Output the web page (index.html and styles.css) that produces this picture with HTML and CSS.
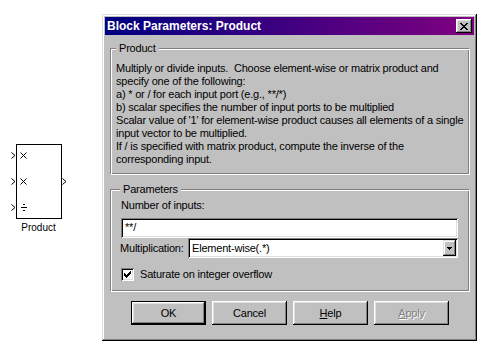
FILE: index.html
```html
<!DOCTYPE html>
<html lang="en">
<head>
    <meta charset="UTF-8">
    <title>Block Parameters: Product</title>
    <link rel="stylesheet" href="styles.css">
</head>
<body>
    <div class="desk">
        <div class="canvas">
            <!-- the Product block on the model canvas -->
            <div class="block">
                <svg width="80" height="82" viewBox="0 0 80 82" shape-rendering="crispEdges">
                    <rect x="16.5" y="4.5" width="45" height="74" fill="#fff" stroke="#000"/>
                    <g fill="none" stroke="#000" shape-rendering="auto">
                        <path d="M11.5 12.5 L15 15.5 L11.5 18.5"/>
                        <path d="M11.5 38.5 L15 41.5 L11.5 44.5"/>
                        <path d="M11.5 64.5 L15 67.5 L11.5 70.5"/>
                        <path d="M62.5 38.5 L66 41.5 L62.5 44.5"/>
                        <path d="M20.5 12.5 L26.5 18.5 M26.5 12.5 L20.5 18.5"/>
                        <path d="M20.5 38.5 L26.5 44.5 M26.5 38.5 L20.5 44.5"/>
                    </g>
                    <path d="M21 67h6v1h-6z M23 64h2v1h-2z M23 70h2v1h-2z" fill="#000"/>
                </svg>
                <div class="block-name">Product</div>
            </div>
        </div>

        <div class="dialog">
            <div class="titlebar">
                <span class="title">Block Parameters: Product</span>
                <span class="close">
                    <svg width="8" height="7" viewBox="0 0 8 7" shape-rendering="crispEdges"><path d="M0 0h2v1H0z M6 0h2v1H6z M1 1h2v1H1z M5 1h2v1H5z M2 2h4v1H2z M3 3h2v1H3z M2 4h4v1H2z M1 5h2v1H1z M5 5h2v1H5z M0 6h2v1H0z M6 6h2v1H6z" fill="#000"/></svg>
                </span>
            </div>

            <div class="content">
                <fieldset class="group about">
                    <legend>Product</legend>
                    <p class="desc">
                        Multiply or divide inputs.&nbsp; Choose element-wise or matrix product and<br>
                        specify one of the following:<br>
                        a) * or / for each input port (e.g., **/*)<br>
                        b) scalar specifies the number of input ports to be multiplied<br>
                        Scalar value of '1' for element-wise product causes all elements of a single<br>
                        input vector to be multiplied.<br>
                        If / is specified with matrix product, compute the inverse of the<br>
                        corresponding input.
                    </p>
                </fieldset>

                <fieldset class="group params">
                    <legend>Parameters</legend>
                    <div class="label">Number of inputs:</div>
                    <div class="field">**/</div>
                    <div class="row">
                        <span class="label">Multiplication:</span>
                        <div class="combo">
                            <span class="combo-text">Element-wise(.*)</span>
                            <span class="combo-btn">
                                <svg width="5" height="3" viewBox="0 0 5 3" shape-rendering="crispEdges"><path d="M0 0h5v1H0z M1 1h3v1H1z M2 2h1v1H2z" fill="#000"/></svg>
                            </span>
                        </div>
                    </div>
                    <div class="row check-row">
                        <span class="checkbox">
                            <svg width="7" height="7" viewBox="0 0 7 7" shape-rendering="crispEdges"><path d="M6 0h1v1H6z M5 1h2v1H5z M0 2h1v1H0z M4 2h3v1H4z M0 3h2v1H0z M3 3h3v1H3z M0 4h5v1H0z M1 5h3v1H1z M2 6h1v1H2z" fill="#000"/></svg>
                        </span>
                        <span>Saturate on integer overflow</span>
                    </div>
                </fieldset>

                <div class="buttons">
                    <span class="btn default">OK</span>
                    <span class="btn">Cancel</span>
                    <span class="btn"><u>H</u>elp</span>
                    <span class="btn disabled"><u>A</u>pply</span>
                </div>
            </div>
        </div>
    </div>
</body>
</html>
```

FILE: styles.css
```css
*{box-sizing: border-box;}
body{margin: 0; background: #fff; color: #000; font-family: "Liberation Sans", Arial, sans-serif; font-size: 11px; line-height: 13px;}

.desk{display: flex; align-items: flex-start;}
.canvas{position: relative; width: 102px; height: 347px;}
.block{position: absolute; left: 0; top: 140px;}
.block svg{display: block;}
.block-name{width: 77px; text-align: center; font-size: 10px; line-height: 12px;}

.dialog{margin-top: 14px; width: 375px; height: 327px; padding: 3px; background: #c0c0c0; display: flex; flex-direction: column;
    box-shadow: inset -1px -1px #000, inset 1px 1px #dfdfdf, inset -2px -2px #808080, inset 2px 2px #fff;}

.titlebar{height: 18px; display: flex; align-items: center; justify-content: space-between; padding: 0 2px 0 2px;
    background: linear-gradient(90deg, #000080, #800080);}
.title{color: #fff; font-weight: bold; font-size: 12px;}
.close{width: 16px; height: 14px; display: flex; align-items: center; justify-content: center; background: #c0c0c0;
    box-shadow: inset -1px -1px #000, inset 1px 1px #fff, inset -2px -2px #808080, inset 2px 2px #dfdfdf;}

.content{padding: 7px 3px 0 5px; letter-spacing: -0.2px;}

.group{margin: 0; min-width: 0; width: 360px; border: 1px solid; border-color: #808080 #fff #fff #808080;
    box-shadow: inset 1px 1px #fff, inset -1px -1px #808080;}
.group legend{padding: 0 3px; background: #c0c0c0;}
.about{padding: 7px 5px 8px 5px;}
.desc{margin: 0;}

.params{margin-top: 8px; padding: 3px 11px 10px 10px;}
.params legend{margin-left: -1px;}
.field{margin-top: 6px; height: 20px; padding: 3px 4px; background: #fff;
    box-shadow: inset 1px 1px #808080, inset -1px -1px #fff, inset 2px 2px #000, inset -2px -2px #dfdfdf;}
.row{display: flex; align-items: center;}
.row .label{margin-left: -1px; width: 68px;}
.params .row:nth-of-type(1){margin-top: 6px;}
.combo{flex: 1; height: 20px; display: flex; align-items: center; justify-content: space-between; padding: 2px 2px 2px 4px; background: #fff;
    box-shadow: inset 1px 1px #808080, inset -1px -1px #fff, inset 2px 2px #000, inset -2px -2px #dfdfdf;}
.combo-btn{width: 13px; height: 16px; display: flex; align-items: center; justify-content: center; background: #c0c0c0;
    box-shadow: inset -1px -1px #000, inset 1px 1px #dfdfdf, inset -2px -2px #808080, inset 2px 2px #fff;}
.check-row{margin-top: 10px; gap: 6px;}
.checkbox{width: 13px; height: 13px; display: flex; align-items: center; justify-content: center; background: #fff;
    box-shadow: inset 1px 1px #808080, inset -1px -1px #fff, inset 2px 2px #000, inset -2px -2px #dfdfdf;}

.buttons{display: flex; gap: 6px; margin: 9px 0 0 21px;}
.btn{width: 75px; height: 24px; display: flex; align-items: center; justify-content: center; background: #c0c0c0;
    box-shadow: inset -1px -1px #000, inset 1px 1px #fff, inset -2px -2px #808080, inset 2px 2px #dfdfdf;}
.btn.default{border: 1px solid #000;}
.btn.disabled{color: #808080; text-shadow: 1px 1px #fff;}
```
